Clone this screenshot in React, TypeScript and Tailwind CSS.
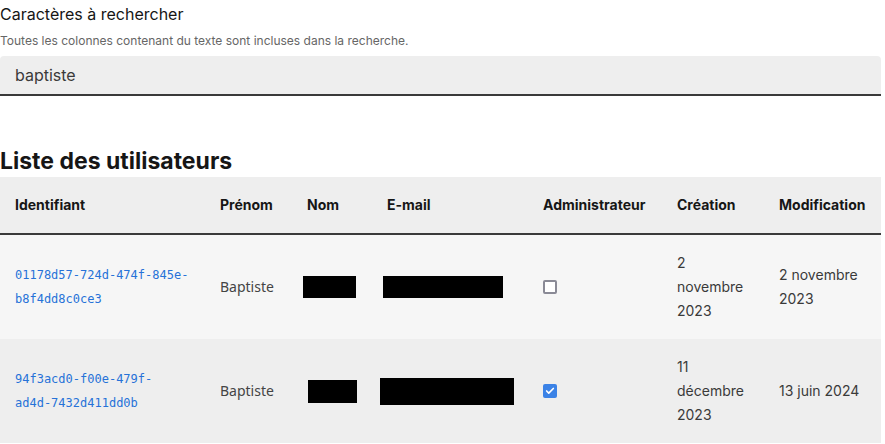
import { Check } from "lucide-react";

type User = {
  id: [string, string];
  prenom: string;
  nom: number[];
  email: number[];
  admin: boolean;
  creation: string[];
  modification: string[];
  bg: string;
};

const users: User[] = [
  {
    id: ["01178d57-724d-474f-845e-", "b8f4dd8c0ce3"],
    prenom: "Baptiste",
    nom: [12, 53, 22],
    email: [12, 120, 22],
    admin: false,
    creation: ["2", "novembre", "2023"],
    modification: ["2 novembre", "2023"],
    bg: "bg-[#f6f6f6]",
  },
  {
    id: ["94f3acd0-f00e-479f-", "ad4d-7432d411dd0b"],
    prenom: "Baptiste",
    nom: [17, 49, 23],
    email: [9, 134, 27],
    admin: true,
    creation: ["11", "décembre", "2023"],
    modification: ["13 juin 2024"],
    bg: "bg-[#eeeeee]",
  },
];

const headers = ["Identifiant", "Prénom", "Nom", "E-mail", "Administrateur", "Création", "Modification"];
const widths = ["w-[204px]", "w-[87px]", "w-[80px]", "w-[156px]", "w-[134px]", "w-[102px]", "w-[118px]"];

export default function App() {
  return (
    <div className="w-[885px] h-[444px] overflow-hidden bg-white text-[#3a3a3a] font-['Inter',sans-serif]">
      <div className="w-[881px]">
        {/* Recherche */}
        <div className="pt-[2px]">
          <label className="block text-[16px] leading-6 text-[#161616]">Caractères à rechercher</label>
          <p className="mt-[5px] text-[12px] leading-5 text-[#666666]">
            Toutes les colonnes contenant du texte sont incluses dans la recherche.
          </p>
          <div className="mt-[5px] h-[40px] bg-[#eeeeee] border-b-2 border-[#3a3a3a] rounded-t-[4px] flex items-center px-[15px] text-[16px] text-[#3a3a3a]">
            baptiste
          </div>
        </div>

        {/* Liste */}
        <h2 className="mt-[49px] text-[23px] leading-[32px] font-bold text-[#161616]">Liste des utilisateurs</h2>
        <table className="table-fixed w-[881px] border-collapse text-[14px] leading-6">
          <colgroup>
            {widths.map((w) => (
              <col key={w} className={w} />
            ))}
          </colgroup>
          <thead>
            <tr className="bg-[#eeeeee] border-b-2 border-[#3a3a3a]">
              {headers.map((h, i) => (
                <th
                  key={h}
                  className={`${i === 0 ? "pl-[15px]" : "pl-4"} pr-2 py-4 text-left font-bold text-[#161616] align-middle whitespace-nowrap`}
                >
                  {h}
                </th>
              ))}
            </tr>
          </thead>
          <tbody>
            {users.map((u) => (
              <tr key={u.id[0]} className={u.bg}>
                <td className="pl-[15px] pr-2 py-4 align-middle font-['DejaVu_Sans_Mono',monospace] text-[12px] leading-6 text-[#2672d8]">
                  <div className="whitespace-nowrap">{u.id[0]}</div>
                  <div className="whitespace-nowrap">{u.id[1]}</div>
                </td>
                <td className="px-4 py-4 align-middle font-['Noto_Sans',sans-serif] text-[#444444]">{u.prenom}</td>
                <td className="py-4 align-middle">
                  <div className="bg-black" style={{ marginLeft: u.nom[0], width: u.nom[1], height: u.nom[2] }} />
                </td>
                <td className="py-4 align-middle">
                  <div className="bg-black" style={{ marginLeft: u.email[0], width: u.email[1], height: u.email[2] }} />
                </td>
                <td className="px-4 py-4 align-middle">
                  {u.admin ? (
                    <span className="flex w-[14px] h-[14px] items-center justify-center rounded-[2px] bg-[#3b82e6]">
                      <Check size={10} strokeWidth={4} className="text-white" />
                    </span>
                  ) : (
                    <span className="block w-[14px] h-[14px] rounded-[2px] border-2 border-[#8a8a96] bg-white" />
                  )}
                </td>
                <td className="px-4 py-4 align-middle">
                  {u.creation.map((l) => (
                    <div key={l}>{l}</div>
                  ))}
                </td>
                <td className="px-4 py-4 align-middle">
                  {u.modification.map((l) => (
                    <div key={l}>{l}</div>
                  ))}
                </td>
              </tr>
            ))}
          </tbody>
        </table>
      </div>
    </div>
  );
}
